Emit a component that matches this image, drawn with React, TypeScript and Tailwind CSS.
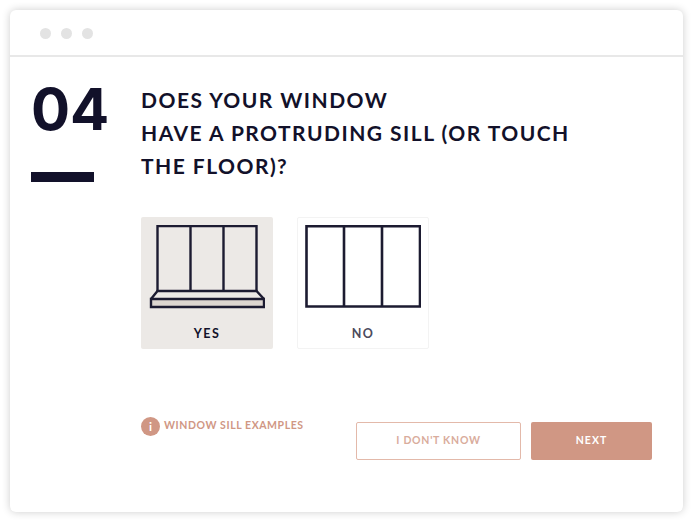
// 質問ステップのカード(窓枠の有無)
function SillIcon() {
  return (
    <svg width="116" height="84" viewBox="0 0 116 84" fill="none" stroke="#1c1b31" strokeWidth="2.4">
      <path d="M8.5 66V1H107.5V66" />
      <path d="M41.5 1V66M74.5 1V66" />
      <path d="M2 74H115V82H2Z" fill="#ddd6d0" />
      <path d="M2 74L8.5 66H107.5L115 74" />
    </svg>
  );
}

function PlainIcon() {
  return (
    <svg width="116" height="84" viewBox="0 0 116 84" fill="none" stroke="#1c1b31" strokeWidth="2.6">
      <path d="M1.5 1.3H115V81.5H1.5Z" />
      <path d="M39 1.3V81.5M77 1.3V81.5" />
    </svg>
  );
}

function OptionCard({
  label,
  selected,
  icon,
}: {
  label: string;
  selected?: boolean;
  icon: React.ReactNode;
}) {
  return (
    <div
      className={`w-[132px] h-[132px] rounded-[2px] flex flex-col items-center ${
        selected ? "bg-[#ece9e6] text-[#12112a] pt-[8px]" : "bg-white border border-[#f3f3f3] text-[#4c4b5c] pt-[7px]"
      }`}
    >
      {icon}
      <span className="mt-[17px] text-[12.5px] leading-[16px] font-bold tracking-[0.11em]">{label}</span>
    </div>
  );
}

export default function App() {
  return (
    <div
      className="w-[693px] h-[522px] bg-white p-[10px]"
      style={{ fontFamily: '"Lato", "Liberation Sans", sans-serif' }}
    >
      <div className="h-full rounded-[6px] bg-white shadow-[0_0_8px_rgba(0,0,0,0.2)] flex flex-col">
        <div className="h-[47px] shrink-0 border-b-2 border-[#e8e8e8] flex items-center gap-[10px] pl-[30px] pt-[2px]">
          <span className="w-[11px] h-[11px] rounded-full bg-[#e3e3e3]" />
          <span className="w-[11px] h-[11px] rounded-full bg-[#e3e3e3]" />
          <span className="w-[11px] h-[11px] rounded-full bg-[#e3e3e3]" />
        </div>

        <div className="flex flex-1 pl-[21px]">
          <div className="w-[110px] shrink-0">
            <div
              className="text-[58px] leading-[60px] font-bold text-[#12112a] mt-[22px]"
              style={{ fontFamily: '"Inter", sans-serif' }}
            >
              04
            </div>
            <div className="w-[63px] h-[10px] bg-[#12112a] mt-[33px]" />
          </div>

          <div className="flex-1 flex flex-col">
            <h1 className="mt-[26px] text-[21px] leading-[33px] font-bold tracking-[0.07em] text-[#12112a]">
              DOES YOUR WINDOW
              <br />
              HAVE A PROTRUDING SILL (OR TOUCH
              <br />
              THE FLOOR)?
            </h1>

            <div className="flex gap-[24px] mt-[35px]">
              <OptionCard label="YES" selected icon={<SillIcon />} />
              <OptionCard label="NO" icon={<PlainIcon />} />
            </div>

            <div className="flex items-start justify-between mt-[68px] pr-[31px]">
              <div className="flex items-center gap-[4px]">
                <span className="w-[19px] h-[19px] rounded-full bg-[#d09784] text-white text-[12px] leading-[19px] font-bold text-center">
                  i
                </span>
                <span className="mb-[2px] text-[10.5px] font-bold tracking-[0.055em] text-[#d09784]">
                  WINDOW SILL EXAMPLES
                </span>
              </div>
              <div className="flex gap-[10px] mt-[5px]">
                <button className="w-[165px] h-[38px] rounded-[2px] border border-[#e3b9aa] bg-white text-[10.5px] font-bold tracking-[0.07em] text-[#d9ac9c]">
                  I DON'T KNOW
                </button>
                <button className="w-[121px] h-[38px] rounded-[2px] bg-[#d09784] text-[10.5px] font-bold tracking-[0.1em] text-white">
                  NEXT
                </button>
              </div>
            </div>
          </div>
        </div>
      </div>
    </div>
  );
}
